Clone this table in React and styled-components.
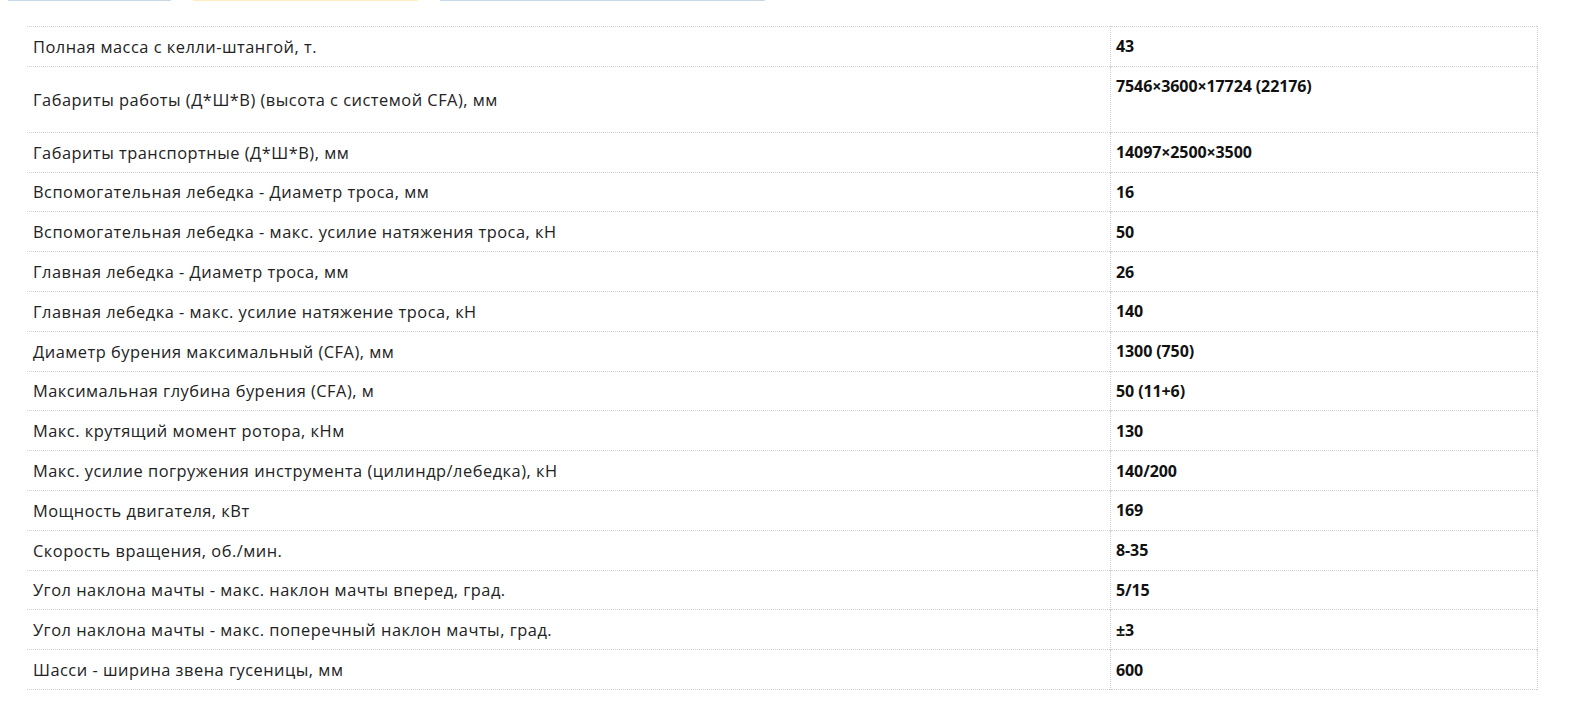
import React from 'react';
import styled, { createGlobalStyle } from 'styled-components';

const GlobalStyle = createGlobalStyle`
  html, body {
    margin: 0;
    padding: 0;
    background: #fff;
  }
  body {
    font-family: "Open Sans", "Noto Sans", sans-serif;
    color: #1c1c1c;
  }
`;

const Page = styled.div`
  padding: 0 32px 40px 27px;
`;

const Tabs = styled.div`
  display: flex;
  gap: 22px;
  height: 1px;
  margin: 0 0 25px -19px;
  overflow: hidden;
`;

const Tab = styled.div`
  width: ${p => p.w}px;
  height: 1px;
  background: ${p => p.color};
  border-radius: 0 0 3px 3px;
`;

const Table = styled.table`
  width: 100%;
  border-collapse: collapse;
  border-top: 1px dotted #cfcfcf;
`;

const Row = styled.tr`
  height: ${p => (p.tall ? 66 : 39.8)}px;
  border-bottom: 1px dotted #cfcfcf;
`;

const Label = styled.td`
  width: 1071px;
  padding: 0 6px;
  font-size: 16.4px;
  font-weight: 400;
  color: #222;
  vertical-align: middle;
  letter-spacing: 0.5px;
`;

const Value = styled.td`
  padding: ${p => (p.top ? '8px' : '0')} 5px 0;
  font-size: 16px;
  font-weight: 700;
  color: #111;
  vertical-align: ${p => (p.top ? 'top' : 'middle')};
  border-left: 1px dotted #cfcfcf;
  border-right: 1px dotted #cfcfcf;
  letter-spacing: -0.1px;
`;

const specs = [
  ['Полная масса с келли-штангой, т.', '43'],
  ['Габариты работы (Д*Ш*В) (высота с системой CFA), мм', '7546×3600×17724 (22176)', true],
  ['Габариты транспортные (Д*Ш*В), мм', '14097×2500×3500'],
  ['Вспомогательная лебедка - Диаметр троса, мм', '16'],
  ['Вспомогательная лебедка - макс. усилие натяжения троса, кН', '50'],
  ['Главная лебедка - Диаметр троса, мм', '26'],
  ['Главная лебедка - макс. усилие натяжение троса, кН', '140'],
  ['Диаметр бурения максимальный (CFA), мм', '1300 (750)'],
  ['Максимальная глубина бурения (CFA), м', '50 (11+6)'],
  ['Макс. крутящий момент ротора, кНм', '130'],
  ['Макс. усилие погружения инструмента (цилиндр/лебедка), кН', '140/200'],
  ['Мощность двигателя, кВт', '169'],
  ['Скорость вращения, об./мин.', '8-35'],
  ['Угол наклона мачты - макс. наклон мачты вперед, град.', '5/15'],
  ['Угол наклона мачты - макс. поперечный наклон мачты, град.', '±3'],
  ['Шасси - ширина звена гусеницы, мм', '600'],
];

export default function App() {
  return (
    <Page>
      <GlobalStyle />
      <Tabs>
        <Tab w={163} color="#c9d8e6" />
        <Tab w={225} color="#fbefc1" />
        <Tab w={325} color="#c9d8e6" />
      </Tabs>
      <Table>
        <tbody>
          {specs.map(([label, value, tall]) => (
            <Row key={label} tall={tall}>
              <Label>{label}</Label>
              <Value top={tall}>{value}</Value>
            </Row>
          ))}
        </tbody>
      </Table>
    </Page>
  );
}
